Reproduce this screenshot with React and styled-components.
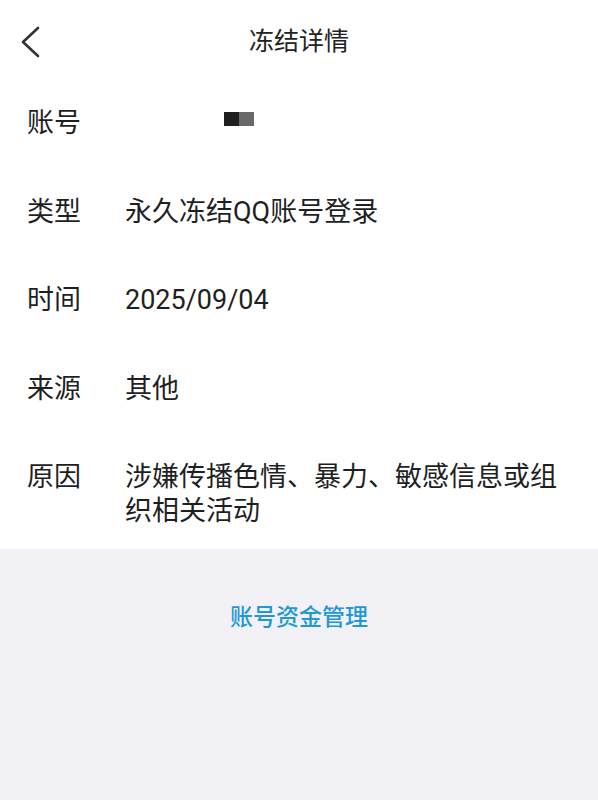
import React from "react";
import styled, { createGlobalStyle } from "styled-components";

const Global = createGlobalStyle`
  html, body { margin: 0; padding: 0; background: #f2f2f6; }
  body { font-family: Roboto, "Noto Sans CJK SC", sans-serif; -webkit-font-smoothing: antialiased; }
`;

const Page = styled.div`
  width: 598px;
  min-height: 800px;
  background: #f2f2f6;
  display: flex;
  flex-direction: column;
`;

const Card = styled.div`
  background: #ffffff;
  padding-bottom: 21px;
`;

const Header = styled.header`
  position: relative;
  height: 86px;
  display: flex;
  align-items: center;
  justify-content: center;
`;

const BackButton = styled.button`
  position: absolute;
  left: 14px;
  top: 20px;
  width: 36px;
  height: 44px;
  border: 0;
  background: transparent;
  padding: 0;
  display: flex;
  align-items: center;
  justify-content: center;
`;

const Title = styled.h1`
  margin: 0;
  font-size: 25px;
  font-weight: 400;
  color: #222;
  line-height: 30px;
  transform: translateY(-1px);
`;

const List = styled.div`
  display: flex;
  flex-direction: column;
  gap: 54.5px;
  padding: 20px 0 0 27px;
`;

const Row = styled.div`
  display: grid;
  grid-template-columns: 98px 432px;
  font-size: 27px;
  line-height: 34px;
  color: #1f1f1f;
`;

const Label = styled.div``;
const Value = styled.div`
  word-break: break-all;
`;

const Masked = styled.span`
  display: inline-flex;
  margin-left: 99px;
  vertical-align: middle;
  height: 14px;
  transform: translateY(-6px);
`;
const MaskCell = styled.span`
  width: 15px;
  height: 14px;
  background: ${(p) => p.$c};
`;

const Footer = styled.div`
  display: flex;
  justify-content: center;
  padding-top: 54px;
`;

const Link = styled.a`
  font-size: 23px;
  font-weight: 500;
  color: #1f98da;
  text-decoration: none;
  line-height: 30px;
`;

const rows = [
  { label: "类型", value: "永久冻结QQ账号登录" },
  { label: "时间", value: "2025/09/04" },
  { label: "来源", value: "其他" },
  { label: "原因", value: "涉嫌传播色情、暴力、敏感信息或组织相关活动" },
];

export default function App() {
  return (
    <>
      <Global />
      <Page>
        <Card>
          <Header>
            <BackButton aria-label="back">
              <svg width="24" height="34" viewBox="0 0 24 34">
                <path d="M18 3 L3 17 L18 31" fill="none" stroke="#333" strokeWidth="2.6" strokeLinecap="round" strokeLinejoin="round" />
              </svg>
            </BackButton>
            <Title>冻结详情</Title>
          </Header>
          <List>
            <Row>
              <Label>账号</Label>
              <Value>
                <Masked>
                  <MaskCell $c="#1e1e1e" />
                  <MaskCell $c="#686868" />
                </Masked>
              </Value>
            </Row>
            {rows.map((r) => (
              <Row key={r.label}>
                <Label>{r.label}</Label>
                <Value>{r.value}</Value>
              </Row>
            ))}
          </List>
        </Card>
        <Footer>
          <Link href="#">账号资金管理</Link>
        </Footer>
      </Page>
    </>
  );
}
